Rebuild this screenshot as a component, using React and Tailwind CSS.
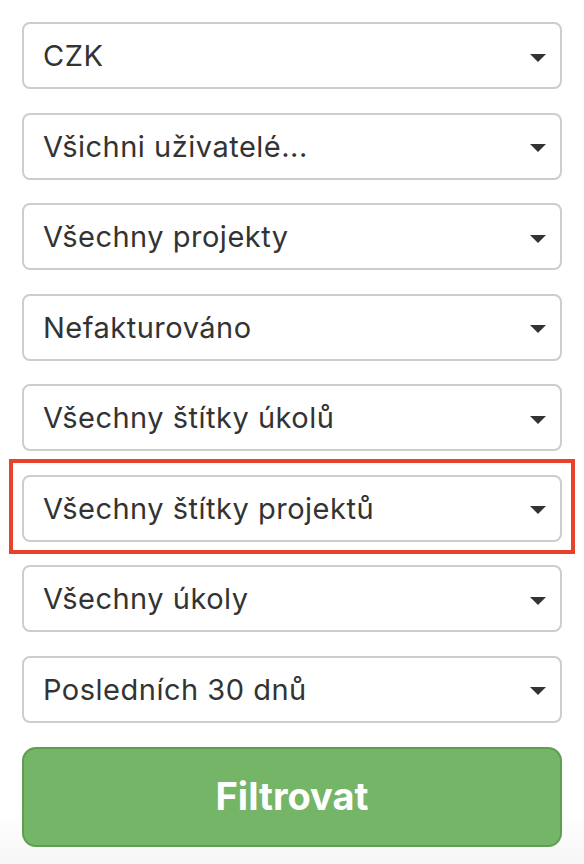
import React from "react";

const options = [
  "CZK",
  "Všichni uživatelé...",
  "Všechny projekty",
  "Nefakturováno",
  "Všechny štítky úkolů",
  "Všechny štítky projektů",
  "Všechny úkoly",
  "Posledních 30 dnů",
];

function Select({ label, highlighted }) {
  const box = (
    <div className="h-[67px] w-full rounded-[8px] border-2 border-[#cdcdcd] bg-white flex items-center justify-between pl-[19px] pr-[14px]">
      <span className="text-[29px] tracking-[0.5px] text-[#333333] leading-none">{label}</span>
      <svg width="16" height="8" viewBox="0 0 16 8" className="mt-[4px]">
        <path d="M0 0 L16 0 L8 8 Z" fill="#333333" />
      </svg>
    </div>
  );
  if (!highlighted) return box;
  return (
    <div className="relative">
      <div className="absolute left-[-13px] right-[-13px] top-[-16px] bottom-[-12px] border-4 border-[#e8432a]" />
      {box}
    </div>
  );
}

export default function App() {
  return (
    <div
      className="w-[584px] h-[864px] overflow-hidden bg-gradient-to-b from-white from-[94%] to-[#f6f6f6]"
      style={{ fontFamily: 'Inter, "Liberation Sans", Arial, sans-serif' }}
    >
      <div className="px-[22px] pt-[22px] flex flex-col gap-[23.5px]">
        {options.map((o, i) => (
          <Select key={o} label={o} highlighted={i === 5} />
        ))}
        <button className="mt-[0.5px] h-[100px] w-full rounded-[14px] border-2 border-[#5e9e51] bg-[#75b568] text-white text-[38px] font-bold flex items-center justify-center">
          Filtrovat
        </button>
      </div>
    </div>
  );
}
